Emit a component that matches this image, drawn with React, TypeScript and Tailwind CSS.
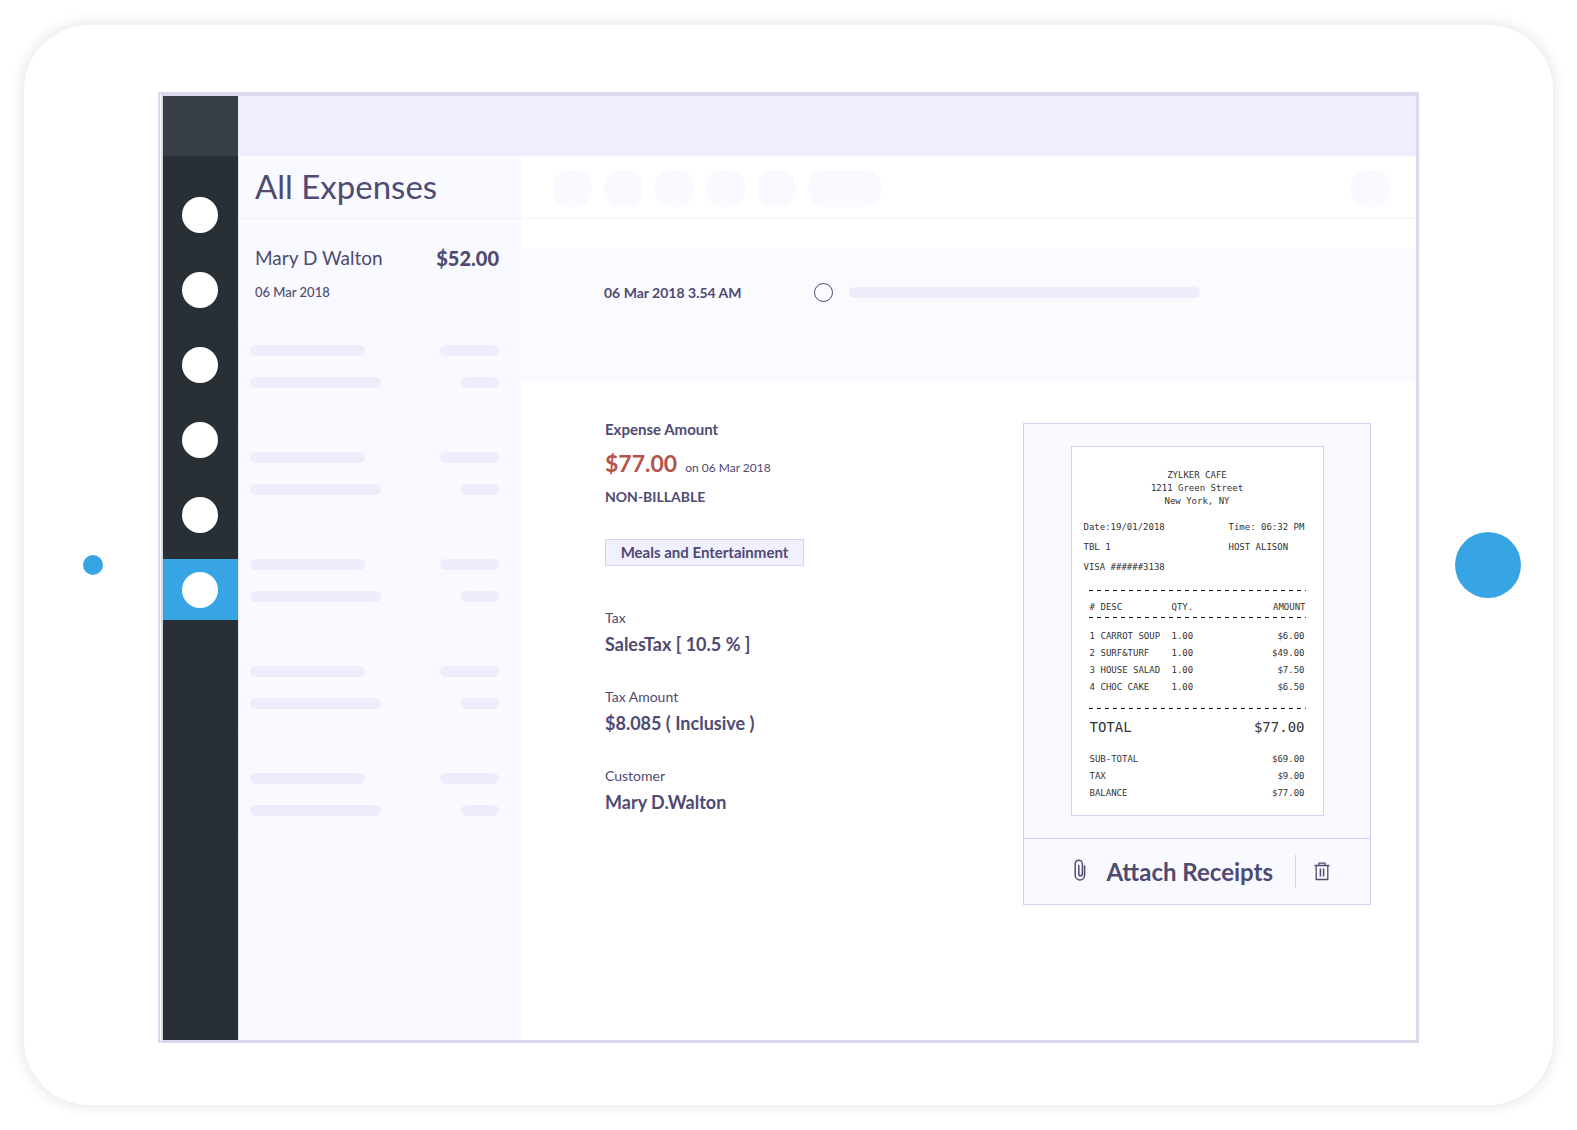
interface SkeletonRow {
  id: number
  padding: string
}

interface Detail {
  label: string
  value: string
}

const navItems = ['Home', 'Contacts', 'Items', 'Trips', 'Reports', 'Expenses']

const skeletonRows: SkeletonRow[] = [
  { id: 1, padding: 'pt-[21px]' },
  { id: 2, padding: 'pt-[26px]' },
  { id: 3, padding: 'pt-[31px]' },
  { id: 4, padding: 'pt-[36px]' },
  { id: 5, padding: 'pt-[41px]' },
]

const details: Detail[] = [
  { label: 'Tax', value: 'SalesTax [ 10.5 % ]' },
  { label: 'Tax Amount', value: '$8.085 ( Inclusive )' },
  { label: 'Customer', value: 'Mary D.Walton' },
]

const receiptItems = [
  { no: 1, desc: 'CARROT SOUP', qty: '1.00', amount: '$6.00' },
  { no: 2, desc: 'SURF&TURF', qty: '1.00', amount: '$49.00' },
  { no: 3, desc: 'HOUSE SALAD', qty: '1.00', amount: '$7.50' },
  { no: 4, desc: 'CHOC CAKE', qty: '1.00', amount: '$6.50' },
]

const receiptTotals = [
  { label: 'SUB-TOTAL', amount: '$69.00' },
  { label: 'TAX', amount: '$9.00' },
  { label: 'BALANCE', amount: '$77.00' },
]

function Sidebar() {
  return (
    <nav className="w-[75px] shrink-0 bg-[#283036]">
      <div className="h-[60px] bg-[#373e44]" />
      <div className="flex flex-col gap-[14px] pt-7">
        {navItems.map((item) => (
          <button
            key={item}
            aria-label={item}
            className={`flex h-[61px] items-center justify-center pr-0.5 ${item === 'Expenses' ? 'bg-[#37a4e4]' : ''}`}
          >
            <span className="size-9 rounded-full bg-white" />
          </button>
        ))}
      </div>
    </nav>
  )
}

function Bar({ className }: { className: string }) {
  return <div className={`h-[11px] rounded-full bg-[#eeedfc] ${className}`} />
}

function ExpenseList() {
  return (
    <aside className="w-[283px] shrink-0 border-l border-[#e6e6ee] bg-[#f9faff]">
      <div className="flex h-[63px] items-center border-b border-[#f0f0f6] pb-0.5 pl-4">
        <h1 className="text-[33px] leading-10">All Expenses</h1>
      </div>

      <div className="h-[105px] border-b border-[#f4f4fc] pt-[27px] pr-[22px] pl-4">
        <div className="flex items-center justify-between leading-6">
          <span className="text-[19px]">Mary D Walton</span>
          <span className="text-xl leading-6 font-black">$52.00</span>
        </div>
        <div className="mt-3 text-[13px] leading-5 font-medium">06 Mar 2018</div>
      </div>

      {skeletonRows.map((row) => (
        <div key={row.id} className={`h-[102px] border-b border-[#f4f4fc] pr-[22px] pl-[11px] ${row.padding}`}>
          <div className="flex justify-between">
            <Bar className="w-[115px]" />
            <Bar className="w-[59px]" />
          </div>
          <div className="mt-[21px] flex justify-between">
            <Bar className="w-[131px]" />
            <Bar className="w-[38px]" />
          </div>
        </div>
      ))}
    </aside>
  )
}

function Toolbar() {
  return (
    <div className="flex h-[63px] items-center gap-3 border-b border-[#f5f5f7] pt-[3px] pr-[26px] pl-8">
      {[1, 2, 3, 4, 5].map((n) => (
        <button key={n} aria-label={`Action ${n}`} className="h-[37px] w-[39px] rounded-2xl bg-[#f9faff]" />
      ))}
      <button aria-label="More actions" className="h-[37px] w-[73px] rounded-2xl bg-[#f9faff]" />
      <button aria-label="Close" className="ml-auto h-[37px] w-[39px] rounded-2xl bg-[#f9faff]" />
    </div>
  )
}

function DashedLine() {
  return (
    <div className="mx-[5px] h-px bg-[repeating-linear-gradient(90deg,#222_0,#222_4px,transparent_4px,transparent_8px)]" />
  )
}

function Receipt() {
  return (
    <div className="h-[370px] w-[253px] border border-[#d3d1f8] bg-white px-3 pt-[22px] font-['DejaVu_Sans_Mono',monospace] text-[9px] leading-[13px] text-[#333]">
      <div className="text-center">
        <p>ZYLKER CAFE</p>
        <p>1211 Green Street</p>
        <p>New York, NY</p>
      </div>

      <div className="mt-[13px] grid grid-cols-[1fr_82px] gap-y-[7px]">
        <span>Date:19/01/2018</span>
        <span className="whitespace-nowrap">Time: 06:32 PM</span>
        <span>TBL 1</span>
        <span>HOST ALISON</span>
        <span>VISA ######3138</span>
      </div>

      <div className="mt-4">
        <DashedLine />
      </div>
      <table className="mx-1.5 w-[216px]">
        <thead>
          <tr className="h-[26px]">
            <th className="w-[11px] pt-1.5 text-left font-normal">#</th>
            <th className="w-[71px] pt-1.5 text-left font-normal">DESC</th>
            <th className="pt-1.5 text-left font-normal">QTY.</th>
            <th className="pt-1.5 text-right font-normal">AMOUNT</th>
          </tr>
        </thead>
      </table>
      <DashedLine />
      <table className="mx-1.5 mt-2.5 w-[215px]">
        <tbody>
          {receiptItems.map((item) => (
            <tr key={item.no} className="h-[17px]">
              <td className="w-[11px]">{item.no}</td>
              <td className="w-[71px] whitespace-nowrap">{item.desc}</td>
              <td>{item.qty}</td>
              <td className="text-right">{item.amount}</td>
            </tr>
          ))}
        </tbody>
      </table>

      <div className="mt-3">
        <DashedLine />
      </div>
      <div className="mx-1.5 mt-2 flex w-[215px] justify-between text-sm leading-5">
        <span>TOTAL</span>
        <span>$77.00</span>
      </div>
      <dl className="mx-1.5 mt-[14px] w-[215px] leading-[17px]">
        {receiptTotals.map((row) => (
          <div key={row.label} className="flex justify-between">
            <dt>{row.label}</dt>
            <dd>{row.amount}</dd>
          </div>
        ))}
      </dl>
    </div>
  )
}

function PaperclipIcon() {
  return (
    <svg className="mb-1 h-[22px] w-3" viewBox="0 0 12 22" fill="none" stroke="currentColor" strokeWidth={1.5} strokeLinecap="round">
      <path d="M10.6 7v9.2a4.7 4.7 0 0 1-9.4 0V4.8a3.5 3.5 0 0 1 7.2 0V15a1.8 1.8 0 0 1-3.6 0V6.5" />
    </svg>
  )
}

function TrashIcon() {
  return (
    <svg className="h-[19px] w-4" viewBox="0 0 16 19" fill="none" stroke="currentColor" strokeWidth={1.3}>
      <path d="M.5 3.5h15M5 3.5V1.2h6v2.3M2.2 3.5v14h11.6v-14" />
      <path d="M6.4 6.5v8M9.6 6.5v8" strokeWidth={1.5} />
    </svg>
  )
}

function ReceiptCard() {
  return (
    <div className="mt-1 w-[348px] border border-[#d3d1f8] bg-[#f9faff]">
      <div className="flex h-[415px] justify-center border-b border-[#d3d1f8] pt-[22px]">
        <Receipt />
      </div>
      <div className="flex h-[65px] items-center justify-end pr-10">
        <button className="flex items-center gap-5 text-2xl leading-8 font-bold">
          <PaperclipIcon />
          Attach Receipts
        </button>
        <div className="ml-[22px] h-[33px] w-px bg-[#d3d1f8]" />
        <button aria-label="Delete receipt" className="ml-[18px]">
          <TrashIcon />
        </button>
      </div>
    </div>
  )
}

function ExpenseDetails() {
  return (
    <div className="text-sm">
      <h2 className="text-[15px] leading-5 font-bold">Expense Amount</h2>
      <div className="flex items-baseline gap-2 pt-2 leading-8">
        <span className="text-[23px] font-bold text-[#b4544c]">$77.00</span>
        <span className="text-xs">on 06 Mar 2018</span>
      </div>
      <div className="pt-2 leading-5 font-bold">NON-BILLABLE</div>

      <div className="mt-8 flex h-[27px] w-[199px] items-center justify-center border border-[#d3d1f8] bg-[#f1f0fe] text-[15px] font-bold">
        Meals and Entertainment
      </div>

      <dl className="mt-[42px] flex flex-col gap-[31px]">
        {details.map((detail) => (
          <div key={detail.label}>
            <dt className="leading-5">{detail.label}</dt>
            <dd className="pt-1 text-lg leading-6 font-bold">{detail.value}</dd>
          </div>
        ))}
      </dl>
    </div>
  )
}

function Screen() {
  return (
    <div className="flex grow border-2 border-[#dad8ec] pl-px">
      <div className="flex grow border-2 border-r border-b border-[#dad8ec]">
        <Sidebar />
        <div className="flex grow flex-col">
          <header className="h-[60px] bg-[#efeefe]" />
          <div className="flex grow">
            <ExpenseList />
            <main className="grow">
              <Toolbar />
              <div className="mt-[29px] flex h-[134px] items-start bg-[#fbfaff] pt-[35px] pl-[83px]">
                <span className="w-[210px] text-sm leading-[19px] font-bold">06 Mar 2018 3.54 AM</span>
                <span className="size-[19px] rounded-full border border-[#504a70]" />
                <Bar className="mt-1 ml-4 w-[351px]" />
              </div>
              <div className="flex items-start justify-between pt-[37px] pr-[45px] pl-[84px]">
                <ExpenseDetails />
                <ReceiptCard />
              </div>
            </main>
          </div>
        </div>
      </div>
    </div>
  )
}

export default function App() {
  return (
    <div className="flex min-h-screen bg-white px-6 py-[25px] font-[Lato,sans-serif] text-[#4f4a72]">
      <div className="flex grow items-center rounded-[65px] bg-white pr-8 pl-[59px] shadow-[0_0_12px_4px_rgba(0,0,0,0.08)]">
        <span className="size-5 shrink-0 rounded-full bg-[#37a4e4]" />
        <div className="mr-9 ml-[55px] flex grow self-stretch pt-[67px] pb-[62px]">
          <Screen />
        </div>
        <span className="size-[66px] shrink-0 rounded-full bg-[#37a4e4]" />
      </div>
    </div>
  )
}
